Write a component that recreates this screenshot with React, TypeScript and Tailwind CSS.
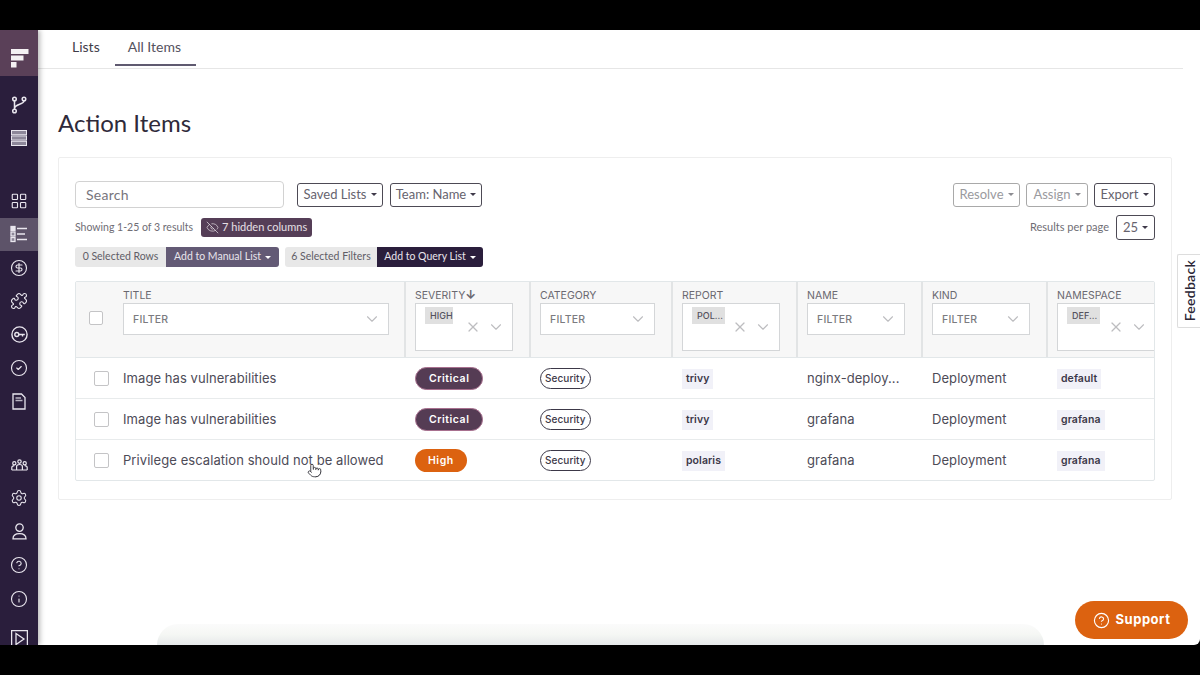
import React from "react";
import {
  ChevronDown,
  CircleCheck,
  CircleDollarSign,
  CircleHelp,
  EyeOff,
  Info,
  LayoutGrid,
  Pointer,
  Puzzle,
  Settings,
  X,
} from "lucide-react";

const Logo = () => (
  <svg width="18" height="19" viewBox="0 0 18 19" fill="#f4f1f3">
    <path d="M0 0h17.5v5H0z" />
    <path d="M0 6.5h12.5v5H0z" />
    <path d="M0 13h5.5v5.5H0z" />
  </svg>
);

const Branch = () => (
  <svg width="18" height="18" viewBox="0 0 18 18" fill="none" stroke="#e9e6ee" strokeWidth="1.5">
    <circle cx="4.5" cy="3" r="1.8" />
    <circle cx="14" cy="3" r="1.8" />
    <circle cx="4.5" cy="15" r="1.8" />
    <path d="M4.5 4.8v8.4M14 4.8c0 4-9.5 3-9.5 8" />
  </svg>
);

const Stack = () => (
  <svg width="16" height="16" viewBox="0 0 16 16" fill="none" stroke="#e9e6ee">
    <rect x="0.5" y="0.5" width="15" height="4.2" fill="#8d8799" />
    <rect x="0.5" y="5.9" width="15" height="4.2" fill="#8d8799" />
    <rect x="0.5" y="11.3" width="15" height="4.2" fill="#8d8799" />
  </svg>
);

const ListIcon = () => (
  <svg width="18" height="18" viewBox="0 0 18 18" fill="none" stroke="#e9e6ee" strokeWidth="1.3">
    <rect x="1" y="1.5" width="4" height="4" fill="#e9e6ee" />
    <rect x="1" y="7" width="4" height="4" fill="#8d8799" />
    <rect x="1" y="12.5" width="4" height="4" fill="#8d8799" />
    <path d="M7 3.5h10M7 9h8M7 14.5h10" />
  </svg>
);

const KeyCircle = () => (
  <svg width="17" height="17" viewBox="0 0 17 17" fill="none" stroke="#e9e6ee" strokeWidth="1.4">
    <circle cx="8.5" cy="8.5" r="7.6" />
    <circle cx="5.8" cy="8.5" r="2" />
    <path d="M7.8 8.5h6M11.5 8.5v2" />
  </svg>
);

const Doc = () => (
  <svg width="14" height="17" viewBox="0 0 14 17" fill="none" stroke="#e9e6ee" strokeWidth="1.3">
    <path d="M1 1h8.5L13 4.5V16H1z" />
    <path d="M3.5 5h5.5M3.5 7.5h7" stroke="#b9b4c2" strokeWidth="1.6" />
  </svg>
);

const Team = () => (
  <svg width="17" height="12" viewBox="0 0 17 12" fill="none" stroke="#e9e6ee" strokeWidth="1.2">
    <circle cx="3.3" cy="4.2" r="1.6" />
    <circle cx="8.5" cy="2.6" r="1.7" />
    <circle cx="13.7" cy="4.2" r="1.6" />
    <path d="M0.8 11V8.6c0-1 1-1.9 2.5-1.9M5.6 11V7.4c0-1 1.2-1.9 2.9-1.9s2.9.9 2.9 1.9V11M16.2 11V8.6c0-1-1-1.9-2.5-1.9M0.8 11h15.4" />
  </svg>
);

const Person = () => (
  <svg width="15" height="17" viewBox="0 0 15 17" fill="none" stroke="#e9e6ee" strokeWidth="1.3">
    <circle cx="7.5" cy="4.6" r="3.7" />
    <path d="M1 15.8c0-3.2 2.6-5.2 6.5-5.2s6.5 2 6.5 5.2z" />
  </svg>
);

const PlayBox = () => (
  <svg width="17" height="18" viewBox="0 0 17 18" fill="none" stroke="#e9e6ee" strokeWidth="1.3">
    <rect x="0.6" y="0.6" width="15.8" height="16.8" />
    <path d="M5 3.5 13 9 5 14.5z" />
  </svg>
);

const iconClass = "text-[#e9e6ee]";

const NavRow = ({ children, active }: { children: React.ReactNode; active?: boolean }) => (
  <div
    className={`flex h-[33.5px] w-full shrink-0 items-center justify-center ${
      active ? "bg-[#5d5369]" : ""
    }`}
  >
    {children}
  </div>
);

const Sidebar = () => (
  <aside className="relative z-10 flex h-full w-[38px] shrink-0 flex-col bg-[#2a1e3c] shadow-[2px_0_5px_rgba(0,0,0,0.28)]">
    <div className="flex h-[46px] shrink-0 items-start justify-center bg-[#5a4058] pl-[1px] pt-[19px]">
      <Logo />
    </div>
    <div className="mt-[12px]">
      <NavRow>
        <Branch />
      </NavRow>
      <NavRow>
        <Stack />
      </NavRow>
    </div>
    <div className="mt-[29px]">
      <NavRow>
        <LayoutGrid size={18} strokeWidth={1.5} className={iconClass} />
      </NavRow>
      <NavRow active>
        <ListIcon />
      </NavRow>
      <NavRow>
        <CircleDollarSign size={18} strokeWidth={1.5} className={iconClass} />
      </NavRow>
      <NavRow>
        <Puzzle size={18} strokeWidth={1.5} className={iconClass} />
      </NavRow>
      <NavRow>
        <KeyCircle />
      </NavRow>
      <NavRow>
        <CircleCheck size={18} strokeWidth={1.5} className={iconClass} />
      </NavRow>
      <NavRow>
        <Doc />
      </NavRow>
    </div>
    <div className="mt-[29.5px]">
      <NavRow>
        <Team />
      </NavRow>
      <NavRow>
        <Settings size={18} strokeWidth={1.4} className={iconClass} />
      </NavRow>
      <NavRow>
        <Person />
      </NavRow>
      <NavRow>
        <CircleHelp size={18} strokeWidth={1.5} className={iconClass} />
      </NavRow>
      <NavRow>
        <Info size={18} strokeWidth={1.5} className={iconClass} />
      </NavRow>
    </div>
    <div className="mt-[14px] flex justify-center">
      <PlayBox />
    </div>
  </aside>
);

const Caret = ({ color = "border-t-[#3f3a4a]" }: { color?: string }) => (
  <span
    className={`ml-[4px] inline-block h-0 w-0 border-x-[3.5px] border-t-[3.5px] border-x-transparent ${color}`}
  />
);

const DropButton = ({
  label,
  className,
  muted,
}: {
  label: string;
  className: string;
  muted?: boolean;
}) => (
  <button
    className={`flex h-[24px] items-center justify-center rounded-[3px] border text-[13px] ${
      muted
        ? "border-[#a9a9a9] text-[#9a9a9e]"
        : "border-[#4d4a55] text-[#66636e]"
    } ${className}`}
  >
    {label}
    <Caret color={muted ? "border-t-[#8d8d92]" : "border-t-[#3f3a4a]"} />
  </button>
);

const Filter = ({ className }: { className: string }) => (
  <div
    className={`flex h-[32px] items-center justify-between border border-[#d4d6d8] bg-white pl-[9px] pr-[7px] ${className}`}
  >
    <span className="pt-[1px] font-['Inter',sans-serif] text-[10.5px] font-medium tracking-[0.02em] text-[#7b7b80]">
      FILTER
    </span>
    <ChevronDown size={18} strokeWidth={1.5} className="text-[#bdbdc0]" />
  </div>
);

const MultiFilter = ({
  value,
  chipClass,
  className,
}: {
  value: string;
  chipClass: string;
  className: string;
}) => (
  <div
    className={`flex h-[48px] items-center justify-between border border-[#d4d6d8] bg-white pl-[9px] pr-[7px] ${className}`}
  >
    <span
      className={`mt-[3px] flex h-[17px] items-center self-start bg-[#e0e0e0] pl-[5px] font-['Inter',sans-serif] text-[9px] font-medium text-[#55525e] ${chipClass}`}
    >
      {value}
    </span>
    <span className="flex items-center gap-[6px]">
      <X size={16} strokeWidth={1.8} className="text-[#bdbdc0]" />
      <ChevronDown size={18} strokeWidth={1.5} className="text-[#bdbdc0]" />
    </span>
  </div>
);

const HeadCell = ({
  label,
  children,
  className,
}: {
  label: React.ReactNode;
  children: React.ReactNode;
  className: string;
}) => (
  <div className={`border-r-2 border-[#e2e4e5] pt-[7px] ${className}`}>
    <div className="mb-[1px] h-[13px] font-['Inter',sans-serif] text-[10.5px] leading-[13px] text-[#6a6870]">
      {label}
    </div>
    {children}
  </div>
);

const Check = ({ className }: { className: string }) => (
  <span className={`block rounded-[2px] border border-[#c4c4c6] bg-white ${className}`} />
);

const rows = [
  { title: "Image has vulnerabilities", sev: "Critical", report: "trivy", name: "nginx-deploy...", ns: "default" },
  { title: "Image has vulnerabilities", sev: "Critical", report: "trivy", name: "grafana", ns: "grafana" },
  { title: "Privilege escalation should not be allowed", sev: "High", report: "polaris", name: "grafana", ns: "grafana" },
];

const gridCols = "grid grid-cols-[40px_290px_125px_142px_125px_125px_125px_107px]";

const Tag = ({ children }: { children: React.ReactNode }) => (
  <span className="inline-flex h-[20px] items-center bg-[#f1f1f8] px-[4px] text-[10.5px] font-semibold text-[#3c3848]">
    {children}
  </span>
);

const ActionTable = () => (
  <div className="mt-[14px] h-[200px] overflow-hidden rounded-[2px] border border-[#e2e7e9] font-['Inter',sans-serif]">
    <div className={`${gridCols} h-[76px] border-b border-[#e2e7e9] bg-[#f7f7f7]`}>
      <div className="flex items-start pl-[13px] pt-[29px]">
        <Check className="h-[14px] w-[14px]" />
      </div>
      <HeadCell label="TITLE" className="pl-[7px] pr-[15px]">
        <Filter className="w-full" />
      </HeadCell>
      <HeadCell
        label={
          <span>
            SEVERITY<span className="text-[12px] font-bold leading-[10px]">↓</span>
          </span>
        }
        className="pl-[9px] pr-[16px]"
      >
        <MultiFilter value="HIGH" chipClass="w-[28px]" className="w-full" />
      </HeadCell>
      <HeadCell label="CATEGORY" className="pl-[9px] pr-[16px]">
        <Filter className="w-full" />
      </HeadCell>
      <HeadCell label="REPORT" className="pl-[9px] pr-[16px]">
        <MultiFilter value="POL..." chipClass="w-[33px]" className="w-full" />
      </HeadCell>
      <HeadCell label="NAME" className="pl-[9px] pr-[16px]">
        <Filter className="w-full" />
      </HeadCell>
      <HeadCell label="KIND" className="pl-[9px] pr-[16px]">
        <Filter className="w-full" />
      </HeadCell>
      <div className="pl-[9px] pt-[7px]">
        <div className="mb-[1px] h-[13px] text-[10.5px] leading-[13px] text-[#6a6870]">NAMESPACE</div>
        <MultiFilter value="DEF..." chipClass="w-[33px]" className="w-[99px]" />
      </div>
    </div>
    {rows.map((row, i) => (
      <div
        key={i}
        className={`${gridCols} h-[41px] items-center text-[13px] tracking-[0.07px] text-[#4d4b57] ${
          i < 2 ? "border-b border-[#e8ebec] pt-[1px]" : ""
        }`}
      >
        <div className="pl-[18px]">
          <Check className="h-[15px] w-[15px]" />
        </div>
        <div className="relative whitespace-nowrap pl-[7px]">
          {row.title}
          {i === 2 && (
            <Pointer
              size={15}
              strokeWidth={1.4}
              className="absolute left-[191px] top-[12px] fill-white text-[#2c2c34]"
            />
          )}
        </div>
        <div className="pl-[9px]">
          <span
            className={`inline-flex h-[23px] items-center rounded-full px-[13px] text-[10.5px] font-semibold tracking-[0.05em] text-white ${
              row.sev === "High"
                ? "bg-[#dc6210]"
                : "border border-[#a8708f] bg-[#553c54]"
            }`}
          >
            {row.sev}
          </span>
        </div>
        <div className="pl-[9px]">
          <span className="inline-flex h-[21px] items-center rounded-full border border-[#3c3848] bg-white px-[4px] text-[10px] font-medium text-[#3c3848]">
            Security
          </span>
        </div>
        <div className="pl-[9px]">
          <Tag>{row.report}</Tag>
        </div>
        <div className="pl-[9px]">{row.name}</div>
        <div className="pl-[9px]">Deployment</div>
        <div className="pl-[9px]">
          <Tag>{row.ns}</Tag>
        </div>
      </div>
    ))}
  </div>
);

const Card = () => (
  <section className="mr-[28px] h-[343px] rounded-[2px] border border-[#eeeeee] px-[16px] pt-[23px] font-['Lato',sans-serif]">
    <div className="flex h-[27px] items-center">
      <div className="flex h-[27px] w-[209px] items-center rounded-[4px] border border-[#d2d2d2] pl-[10px] text-[14px] tracking-[0.02em] text-[#77757d]">
        Search
      </div>
      <DropButton label="Saved Lists" className="ml-[13px] w-[86px]" />
      <DropButton label="Team: Name" className="ml-[7px] w-[92px]" />
      <div className="ml-auto flex gap-[6px]">
        <DropButton label="Resolve" muted className="w-[67px]" />
        <DropButton label="Assign" muted className="w-[62px]" />
        <DropButton label="Export" className="w-[61px]" />
      </div>
    </div>
    <div className="mt-[7px] flex h-[25px] items-center text-[10.5px] text-[#6f6d75]">
      <span>Showing 1-25 of 3 results</span>
      <span className="ml-[8px] flex h-[19px] w-[111px] items-center justify-center gap-[3px] rounded-[3px] bg-[#553e57] text-[11px] text-[#e6e0e6]">
        <EyeOff size={13} strokeWidth={1.3} />7 hidden columns
      </span>
      <span className="ml-auto text-[11px]">Results per page</span>
      <button className="ml-[7px] flex h-[25px] w-[39px] items-center justify-center rounded-[3px] border border-[#4d4a55] text-[13px] text-[#66636e]">
        25
        <Caret />
      </button>
    </div>
    <div className="mt-[7px] flex h-[20px] items-center text-[10.5px]">
      <span className="flex h-[20px] w-[91px] items-center justify-center rounded-l-[3px] bg-[#e8e8e8] text-[#5f5d66]">
        0 Selected Rows
      </span>
      <span className="flex h-[20px] w-[113px] items-center justify-center rounded-r-[3px] bg-[#635a75] text-[#e8e5ec]">
        Add to Manual List
        <Caret color="border-t-white" />
      </span>
      <span className="ml-[6px] flex h-[20px] w-[92px] items-center justify-center rounded-l-[3px] bg-[#e8e8e8] text-[#5f5d66]">
        6 Selected Filters
      </span>
      <span className="flex h-[20px] w-[106px] items-center justify-center rounded-r-[3px] bg-[#2a1e3c] text-[#e8e5ec]">
        Add to Query List
        <Caret color="border-t-white" />
      </span>
    </div>
    <ActionTable />
  </section>
);

export default function App() {
  return (
    <div className="relative flex h-[675px] w-[1200px] flex-col overflow-hidden bg-black">
      <div className="h-[30px] shrink-0" />
      <div className="flex h-[615px] shrink-0 overflow-hidden rounded-br-[6px] bg-white">
        <Sidebar />
        <main className="flex min-w-0 flex-1 flex-col font-['Lato',sans-serif]">
          <div className="mr-[17px] flex h-[39px] shrink-0 border-b border-[#e6e6e6] pl-[34px] text-[14px]">
            <div className="pt-[6px] text-[#3f3c49]">Lists</div>
            <div className="ml-[15px] h-[36px] w-[81px] border-b-2 border-[#5f5a70] pl-[13px] pt-[6px] text-[#55525e]">
              All Items
            </div>
          </div>
          <div className="flex flex-1 flex-col pl-[20px]">
            <h1 className="mt-[39px] h-[49px] shrink-0 text-[24px] leading-[30px] text-[#2f2a3a]">
              Action Items
            </h1>
            <Card />
            <div className="ml-[99px] mr-[156px] mt-auto h-[21px] rounded-t-[32px] bg-linear-to-b from-[#fbfbfb] via-[#f5f7f4] to-[#e6e9ea]" />
          </div>
        </main>
      </div>
      <div className="absolute right-0 top-[254px] flex h-[74px] w-[23px] items-center justify-center rounded-l-[2px] border border-r-0 border-[#dddddd] bg-white">
        <span className="rotate-180 font-['Lato',sans-serif] text-[14px] font-semibold tracking-[0.02em] text-[#2a2535] [writing-mode:vertical-rl]">
          Feedback
        </span>
      </div>
      <button className="absolute left-[1075px] top-[601px] flex h-[38px] w-[113px] items-center justify-center gap-[6px] rounded-full bg-[#dc6210] font-['Inter',sans-serif] text-[13px] font-bold tracking-[0.04em] text-white">
        <CircleHelp size={17} strokeWidth={1.6} />
        Support
      </button>
    </div>
  );
}
